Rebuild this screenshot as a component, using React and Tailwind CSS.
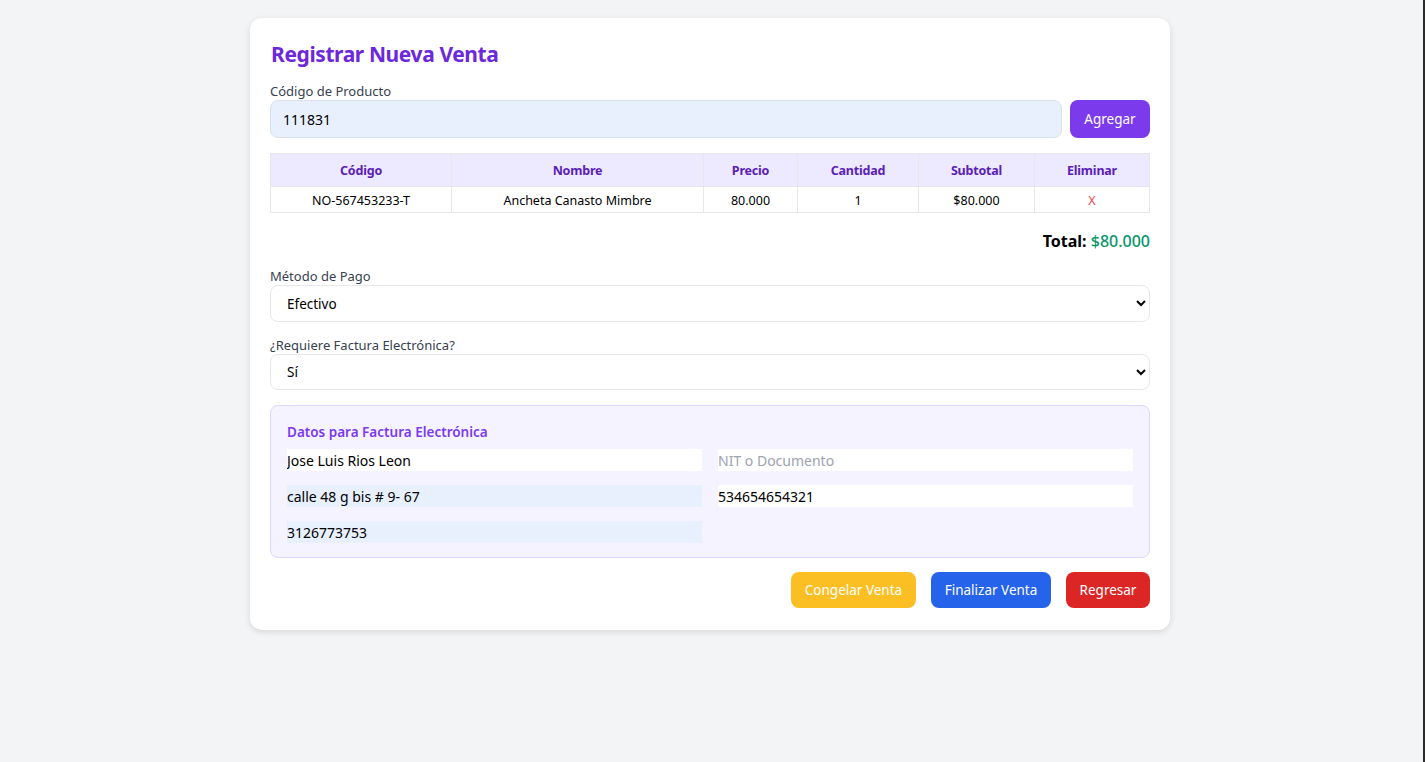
import React from "react";

export default function App() {
  return (
    <div className="flex min-h-[762px] bg-[#f3f4f6] font-['Noto_Sans',sans-serif]">
      <div className="flex-1 pt-[18px] pr-[3px]">
        <div className="mx-auto w-[920px] rounded-xl bg-white px-5 pt-5 pb-[22px] shadow-[0_2px_6px_rgba(0,0,0,0.12)]">
          <h1 className="mb-[11px] pl-px text-[21px] leading-8 font-bold tracking-[-0.4px] text-[#6d28d9]">Registrar Nueva Venta</h1>

          <label className="block pt-px text-[13px] leading-[18px] text-[#374151]">Código de Producto</label>
          <div className="flex gap-2">
            <input
              className="h-[38px] flex-1 rounded-lg border border-[#dbe2ee] bg-[#e8f0fe] px-3 text-sm text-black outline-none"
              defaultValue="111831"
            />
            <button className="h-[38px] w-[80px] rounded-lg bg-[#7c3aed] text-[13.5px] text-white">Agregar</button>
          </div>

          <table className="mt-[15px] w-full border-collapse">
            <colgroup>
              <col className="w-[181px]" />
              <col className="w-[252px]" />
              <col className="w-[94px]" />
              <col className="w-[121px]" />
              <col className="w-[116px]" />
              <col />
            </colgroup>
            <thead>
              <tr className="bg-[#ede9fe] text-[12.5px] text-[#5b21b6]">
                {["Código", "Nombre", "Precio", "Cantidad", "Subtotal", "Eliminar"].map((h) => (
                  <th key={h} className="h-[33px] border border-[#e5e7eb] pt-[2px] text-center font-bold tracking-[-0.2px]">
                    {h}
                  </th>
                ))}
              </tr>
            </thead>
            <tbody>
              <tr className="text-[12.5px] text-black">
                <td className="h-[26px] border border-[#e5e7eb] pt-[3px] text-center">NO-567453233-T</td>
                <td className="border border-[#e5e7eb] pt-[3px] text-center">Ancheta Canasto Mimbre</td>
                <td className="border border-[#e5e7eb] pt-[3px] text-center">80.000</td>
                <td className="border border-[#e5e7eb] pt-[3px] text-center">1</td>
                <td className="border border-[#e5e7eb] pt-[3px] text-center">$80.000</td>
                <td className="border border-[#e5e7eb] pt-[3px] text-center text-[#ef4444]">X</td>
              </tr>
            </tbody>
          </table>

          <div className="mt-4 text-right text-[16px] leading-6 font-bold text-black">
            Total: <span className="font-medium text-[#059669]">$80.000</span>
          </div>

          <label className="mt-[13px] block pt-px text-[13px] leading-[18px] text-[#374151]">Método de Pago</label>
          <select className="h-[37px] w-full rounded-lg border border-[#e5e7eb] bg-white px-3 text-[13.5px] text-black outline-none">
            <option>Efectivo</option>
          </select>

          <label className="mt-[13px] block pt-px text-[13px] leading-[18px] text-[#374151]">¿Requiere Factura Electrónica?</label>
          <select className="h-[36px] w-full rounded-lg border border-[#e5e7eb] bg-white px-3 text-[13.5px] text-black outline-none">
            <option>Sí</option>
          </select>

          <div className="mt-[15px] rounded-lg border border-[#ddd6fe] bg-[#f5f3ff] px-4 pt-4 pb-[14px]">
            <h2 className="mb-[7px] text-[13.5px] leading-5 font-semibold text-[#7c3aed]">Datos para Factura Electrónica</h2>
            <div className="grid grid-cols-2 gap-x-4 gap-y-[14px]">
              <input className="h-[22px] bg-white text-sm text-black outline-none" defaultValue="Jose Luis Rios Leon" />
              <input className="h-[22px] bg-white text-sm text-black outline-none placeholder:text-[#9ca3af]" placeholder="NIT o Documento" />
              <input className="h-[22px] bg-[#e8f0fe] text-sm text-black outline-none" defaultValue="calle 48 g bis # 9- 67" />
              <input className="h-[22px] bg-white text-sm text-black outline-none" defaultValue="534654654321" />
              <input className="h-[22px] bg-[#e8f0fe] text-sm text-black outline-none" defaultValue="3126773753" />
            </div>
          </div>

          <div className="mt-[14px] flex justify-end gap-[15px]">
            <button className="h-9 w-[125px] rounded-lg bg-[#fbbf24] text-[13.5px] text-white">Congelar Venta</button>
            <button className="h-9 w-[120px] rounded-lg bg-[#2563eb] text-[13.5px] text-white">Finalizar Venta</button>
            <button className="h-9 w-[84px] rounded-lg bg-[#dc2626] text-[13.5px] text-white">Regresar</button>
          </div>
        </div>
      </div>
      <div className="w-[2px] bg-[#2b2b2b]" />
    </div>
  );
}
